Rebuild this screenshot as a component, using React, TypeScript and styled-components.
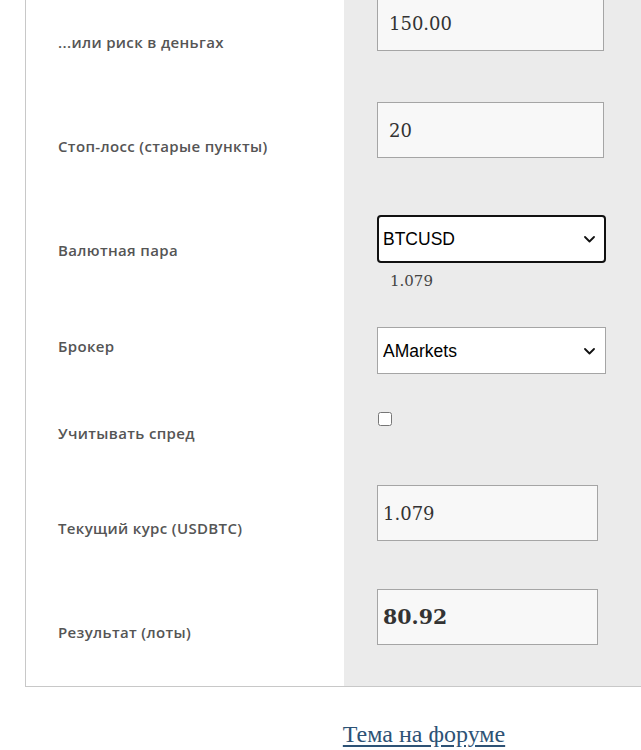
import styled, { createGlobalStyle } from "styled-components";

const GlobalStyle = createGlobalStyle`
  html, body {
    margin: 0;
    padding: 0;
    background: #fff;
    overflow: hidden;
  }
`;

const Page = styled.div`
  width: 641px;
  height: 750px;
  overflow: hidden;
`;

const Table = styled.div`
  margin: -15px 0 0 25px;
  border-left: 1px solid #c8c8c8;
  border-bottom: 1px solid #c8c8c8;
  display: flex;
  flex-direction: column;
`;

const Row = styled.div<{ $h: number }>`
  display: grid;
  grid-template-columns: 318px 1fr;
  height: ${(p) => p.$h}px;
`;

const LabelCell = styled.div<{ $top: number }>`
  padding: ${(p) => p.$top - 1}px 0 0 32px;
  font-family: "Open Sans", "DejaVu Sans", sans-serif;
  font-weight: 600;
  font-size: 15px;
  letter-spacing: 0.35px;
  line-height: 20px;
  color: #555;
`;

const FieldCell = styled.div`
  background: #ebebeb;
  padding: 10px 0 0 33px;
  display: flex;
  flex-direction: column;
  align-items: flex-start;
`;

const TextInput = styled.input<{ $w: number; $pad: number; $bold?: boolean }>`
  box-sizing: border-box;
  width: ${(p) => p.$w}px;
  height: 56px;
  margin: 0;
  padding: 0 0 0 ${(p) => p.$pad}px;
  background: #f8f8f8;
  border: 1px solid #a5a5a5;
  border-radius: 0;
  font-family: "DejaVu Serif", "Liberation Serif", serif;
  font-size: ${(p) => (p.$bold ? 20.5 : 18)}px;
  font-weight: ${(p) => (p.$bold ? 700 : 400)};
  color: #333;
  outline: none;
`;

const SelectWrap = styled.div`
  position: relative;
  display: inline-flex;
`;

const Select = styled.select<{ $focused?: boolean }>`
  appearance: none;
  box-sizing: border-box;
  width: 229px;
  height: ${(p) => (p.$focused ? 48 : 47)}px;
  margin: 0;
  padding: 0 24px 0 ${(p) => (p.$focused ? 4 : 5)}px;
  background: #fff;
  border: ${(p) => (p.$focused ? "2px solid #111" : "1px solid #a5a5a5")};
  border-radius: ${(p) => (p.$focused ? 4 : 0)}px;
  font-family: "Liberation Sans", Arial, sans-serif;
  font-size: 17.5px;
  color: #000;
  outline: none;
`;

const Chevron = styled.svg`
  position: absolute;
  right: 11px;
  top: 50%;
  margin-top: -3px;
  pointer-events: none;
`;

const Rate = styled.div`
  margin: 9px 0 0 13px;
  font-family: "DejaVu Serif", "Liberation Serif", serif;
  font-size: 15px;
  color: #444;
`;

const Check = styled.input`
  margin: 1px 0 0 1px;
  width: 14px;
  height: 14px;
`;

const Footer = styled.div`
  display: flex;
  justify-content: center;
  padding: 34px 0 0 207px;
`;

const ForumLink = styled.a`
  font-family: "Liberation Serif", "Times New Roman", serif;
  font-size: 24px;
  color: #2d5275;
  text-decoration: underline;
  text-underline-offset: 3px;
`;

function Dropdown({ value, options, focused }: { value: string; options: string[]; focused?: boolean }) {
  return (
    <SelectWrap>
      <Select $focused={focused} defaultValue={value}>
        {options.map((o) => (
          <option key={o}>{o}</option>
        ))}
      </Select>
      <Chevron width="11" height="7" viewBox="0 0 11 7">
        <path d="M1 1l4.5 4.5L10 1" fill="none" stroke="#111" strokeWidth="1.8" strokeLinecap="round" strokeLinejoin="round" />
      </Chevron>
    </SelectWrap>
  );
}

export default function App() {
  return (
    <Page>
      <GlobalStyle />
      <Table>
        <Row $h={107}>
          <LabelCell $top={48}>...или риск в деньгах</LabelCell>
          <FieldCell>
            <TextInput $w={227} $pad={11} defaultValue="150.00" />
          </FieldCell>
        </Row>
        <Row $h={113}>
          <LabelCell $top={45}>Стоп-лосс (старые пункты)</LabelCell>
          <FieldCell>
            <TextInput $w={227} $pad={11} defaultValue="20" />
          </FieldCell>
        </Row>
        <Row $h={112}>
          <LabelCell $top={36}>Валютная пара</LabelCell>
          <FieldCell>
            <Dropdown focused value="BTCUSD" options={["BTCUSD", "EURUSD"]} />
            <Rate>1.079</Rate>
          </FieldCell>
        </Row>
        <Row $h={84}>
          <LabelCell $top={20}>Брокер</LabelCell>
          <FieldCell>
            <Dropdown value="AMarkets" options={["AMarkets", "Alpari"]} />
          </FieldCell>
        </Row>
        <Row $h={74}>
          <LabelCell $top={23}>Учитывать спред</LabelCell>
          <FieldCell>
            <Check type="checkbox" />
          </FieldCell>
        </Row>
        <Row $h={104}>
          <LabelCell $top={44}>Текущий курс (USDBTC)</LabelCell>
          <FieldCell>
            <TextInput $w={221} $pad={5} defaultValue="1.079" />
          </FieldCell>
        </Row>
        <Row $h={107}>
          <LabelCell $top={44}>Результат (лоты)</LabelCell>
          <FieldCell>
            <TextInput $w={221} $pad={5} $bold defaultValue="80.92" />
          </FieldCell>
        </Row>
      </Table>
      <Footer>
        <ForumLink href="#">Тема на форуме</ForumLink>
      </Footer>
    </Page>
  );
}
